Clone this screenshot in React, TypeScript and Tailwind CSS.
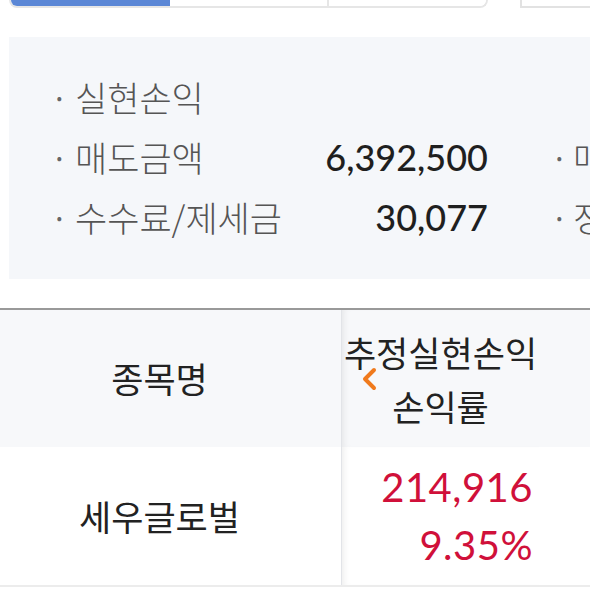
const kr = { fontFamily: '"Noto Sans CJK KR", "Noto Sans", sans-serif' };
const num = { fontFamily: 'Lato, "Noto Sans CJK KR", sans-serif' };

function SummaryRow({ label, value, right }: { label: string; value?: string; right?: string }) {
  return (
    <div className="flex h-[60px] items-center">
      <div className="flex w-[479px] shrink-0 items-center pl-[42px]">
        <span className="w-[24px] text-[30px] text-[#666]">·</span>
        <span className="text-[35px] font-light text-[#555]" style={kr}>
          {label}
        </span>
        <span className="ml-auto text-[36px] font-medium text-[#1f1f1f]" style={num}>
          {value}
        </span>
      </div>
      {right && (
        <div className="flex shrink-0 items-center pl-[63px] whitespace-nowrap">
          <span className="w-[22px] text-[30px] text-[#666]">·</span>
          <span className="text-[35px] font-light text-[#555]" style={kr}>
            {right}
          </span>
        </div>
      )}
    </div>
  );
}

export default function App() {
  return (
    <div className="relative h-[590px] w-[590px] overflow-hidden bg-white" style={kr}>
      {/* segmented tabs, cut off at the top */}
      <div className="flex h-[8px] items-end pl-[9px]">
        <div className="flex h-[8px] w-[479px] shrink-0 overflow-hidden rounded-b-[8px] border-x-2 border-b-2 border-[#e6e6e6]">
          <div className="-mb-[2px] -ml-[2px] h-[10px] w-[161px] rounded-bl-[8px] bg-[#5b87d6]" />
          <div className="w-[159px] border-r-2 border-[#e6e6e6] bg-white" />
          <div className="flex-1 bg-white" />
        </div>
        <div className="ml-[32px] h-[8px] flex-1 border-b-2 border-l-2 border-[#e2e2e2]" />
      </div>

      {/* summary panel */}
      <div className="ml-[9px] mt-[29px] h-[242px] overflow-hidden bg-[#f5f7fa] pt-[30px]">
        <SummaryRow label="실현손익" />
        <SummaryRow label="매도금액" value="6,392,500" right="매수금액" />
        <SummaryRow label="수수료/제세금" value="30,077" right="정산금액" />
      </div>

      {/* table */}
      <div className="mt-[29px] border-t-2 border-[#999]">
        <div className="flex h-[137px] bg-[#f7f8fa]">
          <div className="flex w-[341px] items-center justify-center pr-[22px] text-[35px] font-normal text-[#222]">
            종목명
          </div>
          <div className="relative flex w-[198px] flex-col items-center justify-center border-l border-[#e2e4e8] text-[35px] leading-[54px] font-normal text-[#222] shadow-[inset_6px_0_6px_-4px_rgba(0,0,0,0.07)]">
            <span className="whitespace-nowrap">추정실현손익</span>
            <span>손익률</span>
            <svg className="absolute left-[18px] top-[57px]" width="18" height="24" viewBox="0 0 18 24" fill="none">
              <path d="M14 3 L5 12 L14 21" stroke="#f07a1c" strokeWidth="4" strokeLinecap="round" strokeLinejoin="round" />
            </svg>
          </div>
          <div className="flex-1" />
        </div>
        <div className="flex h-[140px] border-b-2 border-[#ececec] bg-white">
          <div className="flex w-[341px] items-center justify-center pr-[22px] text-[35px] font-normal text-[#222]">
            세우글로벌
          </div>
          <div
            className="flex w-[198px] flex-col items-end justify-center border-l border-[#e2e4e8] pr-[6px] text-[40px] leading-[58px] tracking-[0.5px] text-[#d0103a] shadow-[inset_6px_0_6px_-4px_rgba(0,0,0,0.07)]"
            style={num}
          >
            <span>214,916</span>
            <span>9.35%</span>
          </div>
          <div className="flex-1" />
        </div>
      </div>
    </div>
  );
}
